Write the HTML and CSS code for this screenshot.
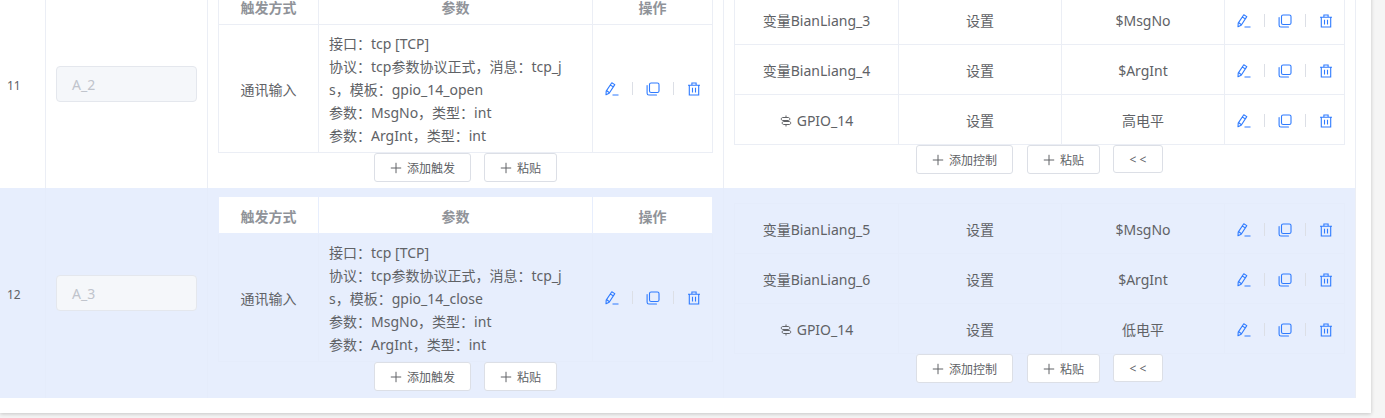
FILE: index.html
```html
<!DOCTYPE html>
<html lang="zh-CN">
<head>
  <meta charset="UTF-8" />
  <title>触发控制</title>
  <link rel="stylesheet" href="styles.css">
  <script src="app.js" defer></script>
</head>
<body>

<svg class="icon-defs" width="0" height="0">
  <symbol id="i-edit" viewBox="0 0 14 14">
    <path d="M6.800.8l3 1.800-5.600 8.600-3.200 1.500.2-3.600z M5.300 3l3 1.900 M1.800 8.700l2.600 2" fill="none" stroke="currentColor" stroke-width="1.100" stroke-linejoin="round"/>
    <path d="M7.500 13h6" fill="none" stroke="currentColor" stroke-width="1"/>
  </symbol>
  <symbol id="i-copy" viewBox="0 0 14 14">
    <rect x="3.500" y="1" width="9.500" height="9.500" rx="1.600" fill="none" stroke="currentColor" stroke-width="1.100"/>
    <path d="M1.100 3.600v7.600c0 1 .8 1.800 1.800 1.800h7.600" fill="none" stroke="currentColor" stroke-width="1.100" stroke-linecap="round"/>
  </symbol>
  <symbol id="i-trash" viewBox="0 0 14 14">
    <path d="M1 3.200h12 M4.900 3V1h4.200v2 M2.300 3.200V13h9.400V3.200 M5.500 5.800v4.600 M8.500 5.800v4.600" fill="none" stroke="currentColor" stroke-width="1.100"/>
  </symbol>
  <symbol id="i-plus" viewBox="0 0 12 12">
    <path d="M6 .8v10.400 M.8 6h10.400" fill="none" stroke="currentColor" stroke-width="1"/>
  </symbol>
  <symbol id="i-gpio" viewBox="0 0 12 12">
    <path d="M6 .5v2 M6 9.500v2 M2.800 2.500h5.400c.9 0 1.600.6 1.600 1.500s-.7 1.500-1.600 1.500H2.800C1.900 5.500 1.300 4.900 1.300 4s.6-1.500 1.500-1.500z M3.800 6.500h5.400c.9 0 1.500.6 1.500 1.500s-.6 1.500-1.500 1.500H3.800C2.900 9.500 2.200 8.900 2.200 8s.7-1.500 1.600-1.500z" fill="none" stroke="currentColor" stroke-width="1"/>
  </symbol>
</svg>

<!-- table body, scrolled so row 11 is cut off at the top -->
<main class="card">
  <div class="rows" id="rows"></div>
</main>

</body>
</html>
```
FILE: app.js
```js
var data = [
  {
    no: 11, name: 'A_2', tpl: 'gpio_14_open', level: '高电平',
    vars: [['变量BianLiang_3', '$MsgNo'], ['变量BianLiang_4', '$ArgInt']]
  },
  {
    no: 12, name: 'A_3', tpl: 'gpio_14_close', level: '低电平', current: true,
    vars: [['变量BianLiang_5', '$MsgNo'], ['变量BianLiang_6', '$ArgInt']]
  }
];

function ops() {
  return '<div class="ops">' +
    '<svg class="op"><use href="#i-edit"/></svg><i class="sep"></i>' +
    '<svg class="op"><use href="#i-copy"/></svg><i class="sep"></i>' +
    '<svg class="op"><use href="#i-trash"/></svg></div>';
}

function btn(text) {
  return '<button class="btn"><svg class="plus"><use href="#i-plus"/></svg>' + text + '</button>';
}

function ctrlRow(target, value) {
  return '<tr><td>' + target + '</td><td>设置</td><td>' + value + '</td><td>' + ops() + '</td></tr>';
}

document.getElementById('rows').innerHTML = data.map(function (r) {
  var ctrls = r.vars.map(function (v) { return ctrlRow(v[0], v[1]); }).join('') +
    ctrlRow('<svg class="gpio"><use href="#i-gpio"/></svg>GPIO_14', r.level);
  return '<section class="row' + (r.current ? ' row-current' : '') + '">' +
    '<div class="col col-no">' + r.no + '</div>' +
    '<div class="col col-name"><div class="input">' + r.name + '</div></div>' +
    '<div class="col col-trigger">' +
      '<table class="grid trigger-table"><thead><tr><th class="t-type">触发方式</th><th class="t-param">参数</th><th>操作</th></tr></thead>' +
      '<tbody><tr><td>通讯输入</td><td class="params">接口：tcp [TCP]<br>协议：tcp参数协议正式，消息：tcp_js，模板：' + r.tpl +
      '<br>参数：MsgNo，类型：int<br>参数：ArgInt，类型：int</td><td>' + ops() + '</td></tr></tbody></table>' +
      '<div class="actions">' + btn('添加触发') + btn('粘贴') + '</div>' +
    '</div>' +
    '<div class="col col-control">' +
      '<table class="grid control-table"><colgroup><col class="c-target"><col class="c-mode"><col class="c-value"><col></colgroup><tbody>' + ctrls + '</tbody></table>' +
      '<div class="actions actions-control">' + btn('添加控制') + btn('粘贴') + '<button class="btn btn-fold">&lt; &lt;</button></div>' +
    '</div>' +
  '</section>';
}).join('');
```
FILE: styles.css
```css
body {
  margin: 0;
  height: 418px;
  overflow: hidden;
  background: #f5f5f5;
  font-family: "Noto Sans", "Noto Sans CJK SC", sans-serif;
  font-size: 14px;
  color: #606266;
}

.icon-defs {
  display: block;
  height: 0;
}

.card {
  width: 1371px;
  height: 434px;
  margin-top: -21px;
  background: #fff;
  box-shadow: 0 1px 4px rgba(0, 0, 0, 0.2);
}

.rows {
  width: 1356px;
  border-right: 1px solid #ebeef5;
  box-sizing: border-box;
}

.row {
  display: grid;
  grid-template-columns: 46px 162px 516px 1fr;
  height: 209px;
}

.row-current {
  height: 210px;
  background: #e7eefd;
}

.col {
  box-sizing: border-box;
  border-right: 1px solid #ebeef5;
}

.row-current .col {
  border-right-color: #e5ecfb;
}

.col:last-child {
  border-right: 0;
}

.col-no {
  display: flex;
  align-items: center;
  padding: 3px 0 0 7px;
  font-size: 12px;
}

.col-name {
  display: flex;
  align-items: center;
  padding: 0 10px;
}

.input {
  width: 100%;
  height: 36px;
  box-sizing: border-box;
  padding-left: 15px;
  line-height: 36px;
  background: #f5f7fa;
  border: 1px solid #e4e7ed;
  border-radius: 4px;
  color: #c0c4cc;
}

.col-trigger {
  padding: 8px 10px 0;
}

.col-control {
  padding: 15px 10px 0;
}

.grid {
  width: 100%;
  table-layout: fixed;
  border-collapse: collapse;
  text-align: center;
}

.grid td,
.grid th {
  border: 1px solid #ebeef5;
  padding: 0;
}

.row-current .grid td {
  border-color: #e5ecfb;
}

.row-current .grid th {
  border-color: #e7eefd;
}

.grid th {
  height: 35px;
  padding-top: 1px;
  background: #fff;
  color: #909399;
  font-size: 14px;
}

.t-type {
  width: 99px;
}

.t-param {
  width: 273px;
}

.grid .params {
  height: 126px;
  padding: 1px 24px 0 10px;
  line-height: 23px;
  text-align: left;
  word-break: break-all;
}

.c-target {
  width: 164px;
}

.c-mode,
.c-value {
  width: 163px;
}

.grid.control-table td {
  height: 47px;
  padding-top: 2px;
  line-height: 20px;
}

.ops {
  display: flex;
  align-items: center;
  justify-content: center;
}

.op {
  width: 14px;
  height: 14px;
  color: #2f7bff;
}

.sep {
  width: 1px;
  height: 13px;
  margin: 0 13px;
  background: #dcdfe6;
}

.gpio {
  width: 12px;
  height: 12px;
  margin-right: 5px;
  vertical-align: -1px;
  color: #606266;
}

.actions {
  display: flex;
  justify-content: center;
  gap: 13px;
}

.actions-control {
  justify-content: flex-start;
  gap: 14px;
  padding-left: 182px;
}

.btn {
  display: flex;
  align-items: center;
  height: 29px;
  padding: 0 15px;
  background: #fff;
  border: 1px solid #dcdfe6;
  border-radius: 3px;
  font-family: inherit;
  font-size: 12px;
  color: #606266;
}

.btn-fold {
  height: 28px;
  margin-left: -1px;
  padding: 0 15.5px;
}

.plus {
  width: 12px;
  height: 12px;
  margin-right: 5px;
}
```
